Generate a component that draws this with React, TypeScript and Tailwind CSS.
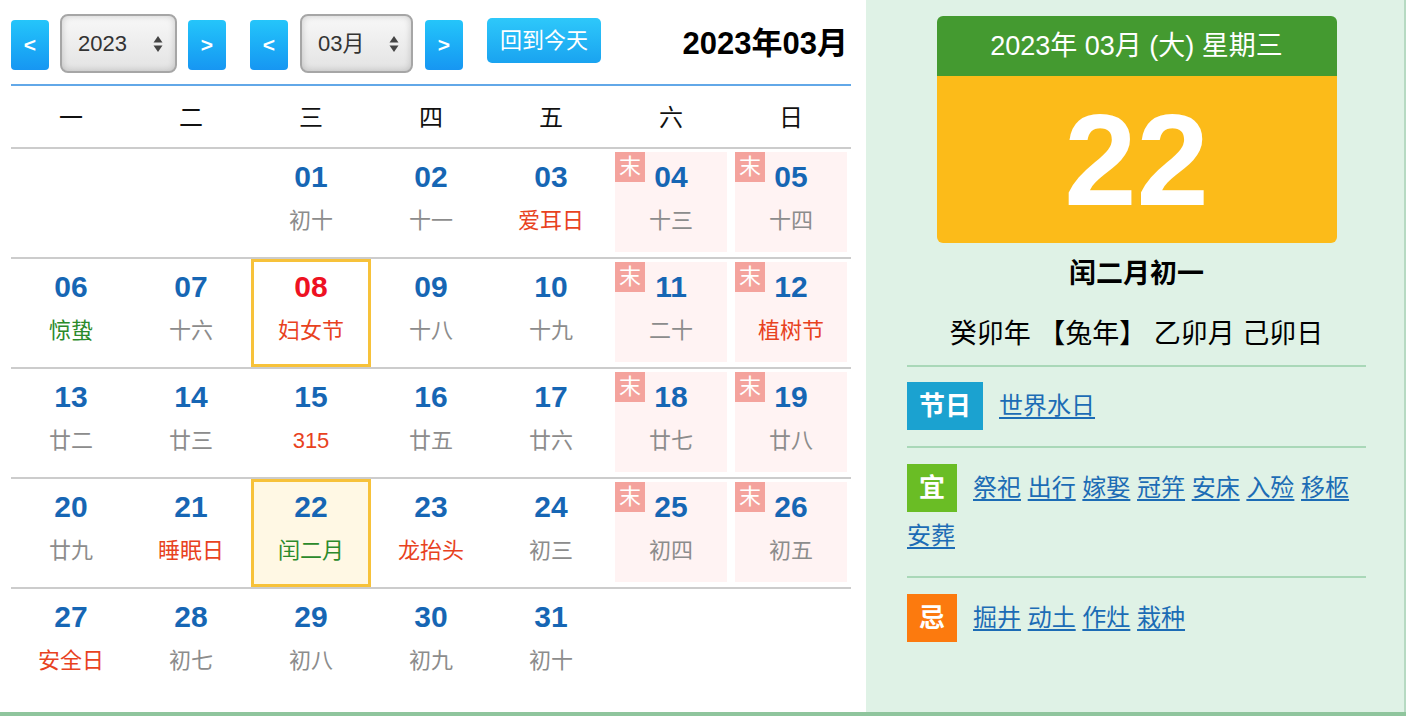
import React from 'react';

type Day = {
    d: string;
    lunar: string;
    tone?: 'r' | 'g';
    weekend?: boolean;
    today?: boolean;
    marked?: boolean;
} | null;

const rows: Day[][] = [
    [null, null, { d: '01', lunar: '初十' }, { d: '02', lunar: '十一' }, { d: '03', lunar: '爱耳日', tone: 'r' }, { d: '04', lunar: '十三', weekend: true }, { d: '05', lunar: '十四', weekend: true }],
    [{ d: '06', lunar: '惊蛰', tone: 'g' }, { d: '07', lunar: '十六' }, { d: '08', lunar: '妇女节', tone: 'r', marked: true }, { d: '09', lunar: '十八' }, { d: '10', lunar: '十九' }, { d: '11', lunar: '二十', weekend: true }, { d: '12', lunar: '植树节', tone: 'r', weekend: true }],
    [{ d: '13', lunar: '廿二' }, { d: '14', lunar: '廿三' }, { d: '15', lunar: '315', tone: 'r' }, { d: '16', lunar: '廿五' }, { d: '17', lunar: '廿六' }, { d: '18', lunar: '廿七', weekend: true }, { d: '19', lunar: '廿八', weekend: true }],
    [{ d: '20', lunar: '廿九' }, { d: '21', lunar: '睡眠日', tone: 'r' }, { d: '22', lunar: '闰二月', tone: 'g', today: true }, { d: '23', lunar: '龙抬头', tone: 'r' }, { d: '24', lunar: '初三' }, { d: '25', lunar: '初四', weekend: true }, { d: '26', lunar: '初五', weekend: true }],
    [{ d: '27', lunar: '安全日', tone: 'r' }, { d: '28', lunar: '初七' }, { d: '29', lunar: '初八' }, { d: '30', lunar: '初九' }, { d: '31', lunar: '初十' }, null, null],
];

const weekdays = ['一', '二', '三', '四', '五', '六', '日'];

const NavButton = ({ label, className }: { label: string; className?: string }) => (
    <button className={`w-[38px] h-[50px] rounded-[4px] bg-linear-to-b from-[#25c5fa] to-[#1796f2] text-white font-bold text-[21px] flex items-center justify-center ${className ?? ''}`}>
        {label}
    </button>
);

const FakeSelect = ({ value, width, className }: { value: string; width: string; className?: string }) => (
    <div className={`${width} h-[59px] rounded-[8px] border-2 border-[#a6a6a6] bg-linear-to-b from-[#f8f8f8] to-[#e3e3e3] shadow-[inset_0_0_7px_rgba(0,0,0,0.18)] flex items-center justify-between pl-[16px] pr-[12px] text-[22px] text-[#333] ${className ?? ''}`}>
        <span>{value}</span>
        <svg width="10" height="18" viewBox="0 0 10 18">
            <path d="M5 1 L9.5 7.5 H0.5 Z" fill="#444" />
            <path d="M5 17 L9.5 10.5 H0.5 Z" fill="#444" />
        </svg>
    </div>
);

const Cell = ({ day }: { day: Day }) => {
    if (!day) return <div className="h-[108px]" />;
    const lunarColor = day.tone === 'r' ? 'text-[#e8421e]' : day.tone === 'g' ? 'text-[#2b8a2b]' : 'text-[#8c8c8c]';
    const numColor = day.marked ? 'text-[#ee1122]' : 'text-[#1666b4]';
    const content = (
        <>
            <div className={`mt-[10px] text-[30px] leading-[36px] font-bold ${numColor}`}>{day.d}</div>
            <div className={`mt-[11px] text-[22px] leading-[30px] ${lunarColor}`}>{day.lunar}</div>
        </>
    );
    if (day.weekend) {
        return (
            <div className="h-[108px] pt-[3px] pb-[5px] px-[4px]">
                <div className="relative h-full bg-[#fff3f3] flex flex-col items-center">
                    <span className="absolute left-0 top-0 w-[30px] h-[30px] bg-[#f4a39d] text-white text-[22px] leading-[30px] text-center">末</span>
                    <div className="-mt-[3px] flex flex-col items-center">{content}</div>
                </div>
            </div>
        );
    }
    if (day.today || day.marked) {
        return (
            <div className={`h-[108px] border-[3px] border-[#f7c23a] flex flex-col items-center ${day.today ? 'bg-[#fff8e4]' : 'bg-white'}`}>
                <div className="-mt-[3px] flex flex-col items-center">{content}</div>
            </div>
        );
    }
    return <div className="h-[108px] flex flex-col items-center">{content}</div>;
};

const Section = ({ badge, badgeClass, items, first }: { badge: string; badgeClass: string; items: string[]; first?: boolean }) => (
    <div className={`border-t-2 border-[#a9d8b8] ${first ? 'pt-[15px]' : 'pt-[16px]'} pb-[16px] text-[24px] leading-[48px]`}>
        <span className={`inline-block align-top h-[48px] px-[12px] mr-[16px] text-white font-bold text-[26px] leading-[48px] ${badgeClass}`}>{badge}</span>
        {items.map((it, i) => (
            <React.Fragment key={it}>
                <a href="#" className="text-[#1c6cb5] underline underline-offset-[3px]">{it}</a>
                {i < items.length - 1 ? ' ' : ''}
            </React.Fragment>
        ))}
    </div>
);

const App = () => {
    return (
        <div className="w-[1406px] h-[716px] flex border-b-4 border-[#8fc59d] bg-white font-['Liberation_Sans','Noto_Sans_CJK_SC',sans-serif]">
            {/* Calendar */}
            <div className="w-[866px] pl-[11px] pr-[15px]">
                <div className="h-[84px] flex items-start">
                    <NavButton label="<" className="mt-[20px]" />
                    <FakeSelect value="2023" width="w-[117px]" className="mt-[14px] ml-[11px]" />
                    <NavButton label=">" className="mt-[20px] ml-[11px]" />
                    <NavButton label="<" className="mt-[20px] ml-[24px]" />
                    <FakeSelect value="03月" width="w-[113px]" className="mt-[14px] ml-[12px]" />
                    <NavButton label=">" className="mt-[20px] ml-[12px]" />
                    <button className="mt-[18px] ml-[24px] w-[114px] h-[45px] rounded-[5px] bg-linear-to-b from-[#2ec8fa] to-[#1aa3f0] text-white text-[22px]">回到今天</button>
                    <div className="ml-auto mr-[3px] mt-[24px] text-[31px] leading-[40px] font-bold text-black">2023年03月</div>
                </div>
                <div className="border-t-2 border-[#62a8e8] border-b-2 border-b-[#cccccc] h-[65px] pt-[2px] grid grid-cols-7 items-center">
                    {weekdays.map((w) => (
                        <div key={w} className="text-center text-[24px] text-[#111]">{w}</div>
                    ))}
                </div>
                {rows.map((row, ri) => (
                    <div key={ri} className={`grid grid-cols-7 ${ri < rows.length - 1 ? 'border-b-2 border-[#cccccc]' : ''}`}>
                        {row.map((day, ci) => (
                            <Cell key={ci} day={day} />
                        ))}
                    </div>
                ))}
            </div>

            {/* Day detail */}
            <div className="flex-1 bg-[#dff2e6] border-r-2 border-[#b6dac2] pl-[41px] pr-[38px]">
                <div className="mx-auto mt-[16px] w-[400px]">
                    <div className="h-[60px] rounded-t-[6px] bg-[#449a30] text-white text-[27px] flex items-center justify-center">2023年 03月 (大) 星期三</div>
                    <div className="h-[167px] rounded-b-[6px] bg-[#fcbb19] text-white text-[130px] font-bold leading-none flex items-center justify-center">22</div>
                </div>
                <div className="mt-[11px] text-center text-[27px] leading-[40px] font-bold text-black">闰二月初一</div>
                <div className="mt-[20px] mb-[11px] text-center text-[27px] leading-[40px] text-black">癸卯年 【兔年】 乙卯月 己卯日</div>
                <Section first badge="节日" badgeClass="bg-[#1ba2d0]" items={['世界水日']} />
                <Section badge="宜" badgeClass="bg-[#6abd25]" items={['祭祀', '出行', '嫁娶', '冠笄', '安床', '入殓', '移柩', '安葬']} />
                <Section badge="忌" badgeClass="bg-[#fc7a0e]" items={['掘井', '动土', '作灶', '栽种']} />
            </div>
        </div>
    );
};

export default App;
